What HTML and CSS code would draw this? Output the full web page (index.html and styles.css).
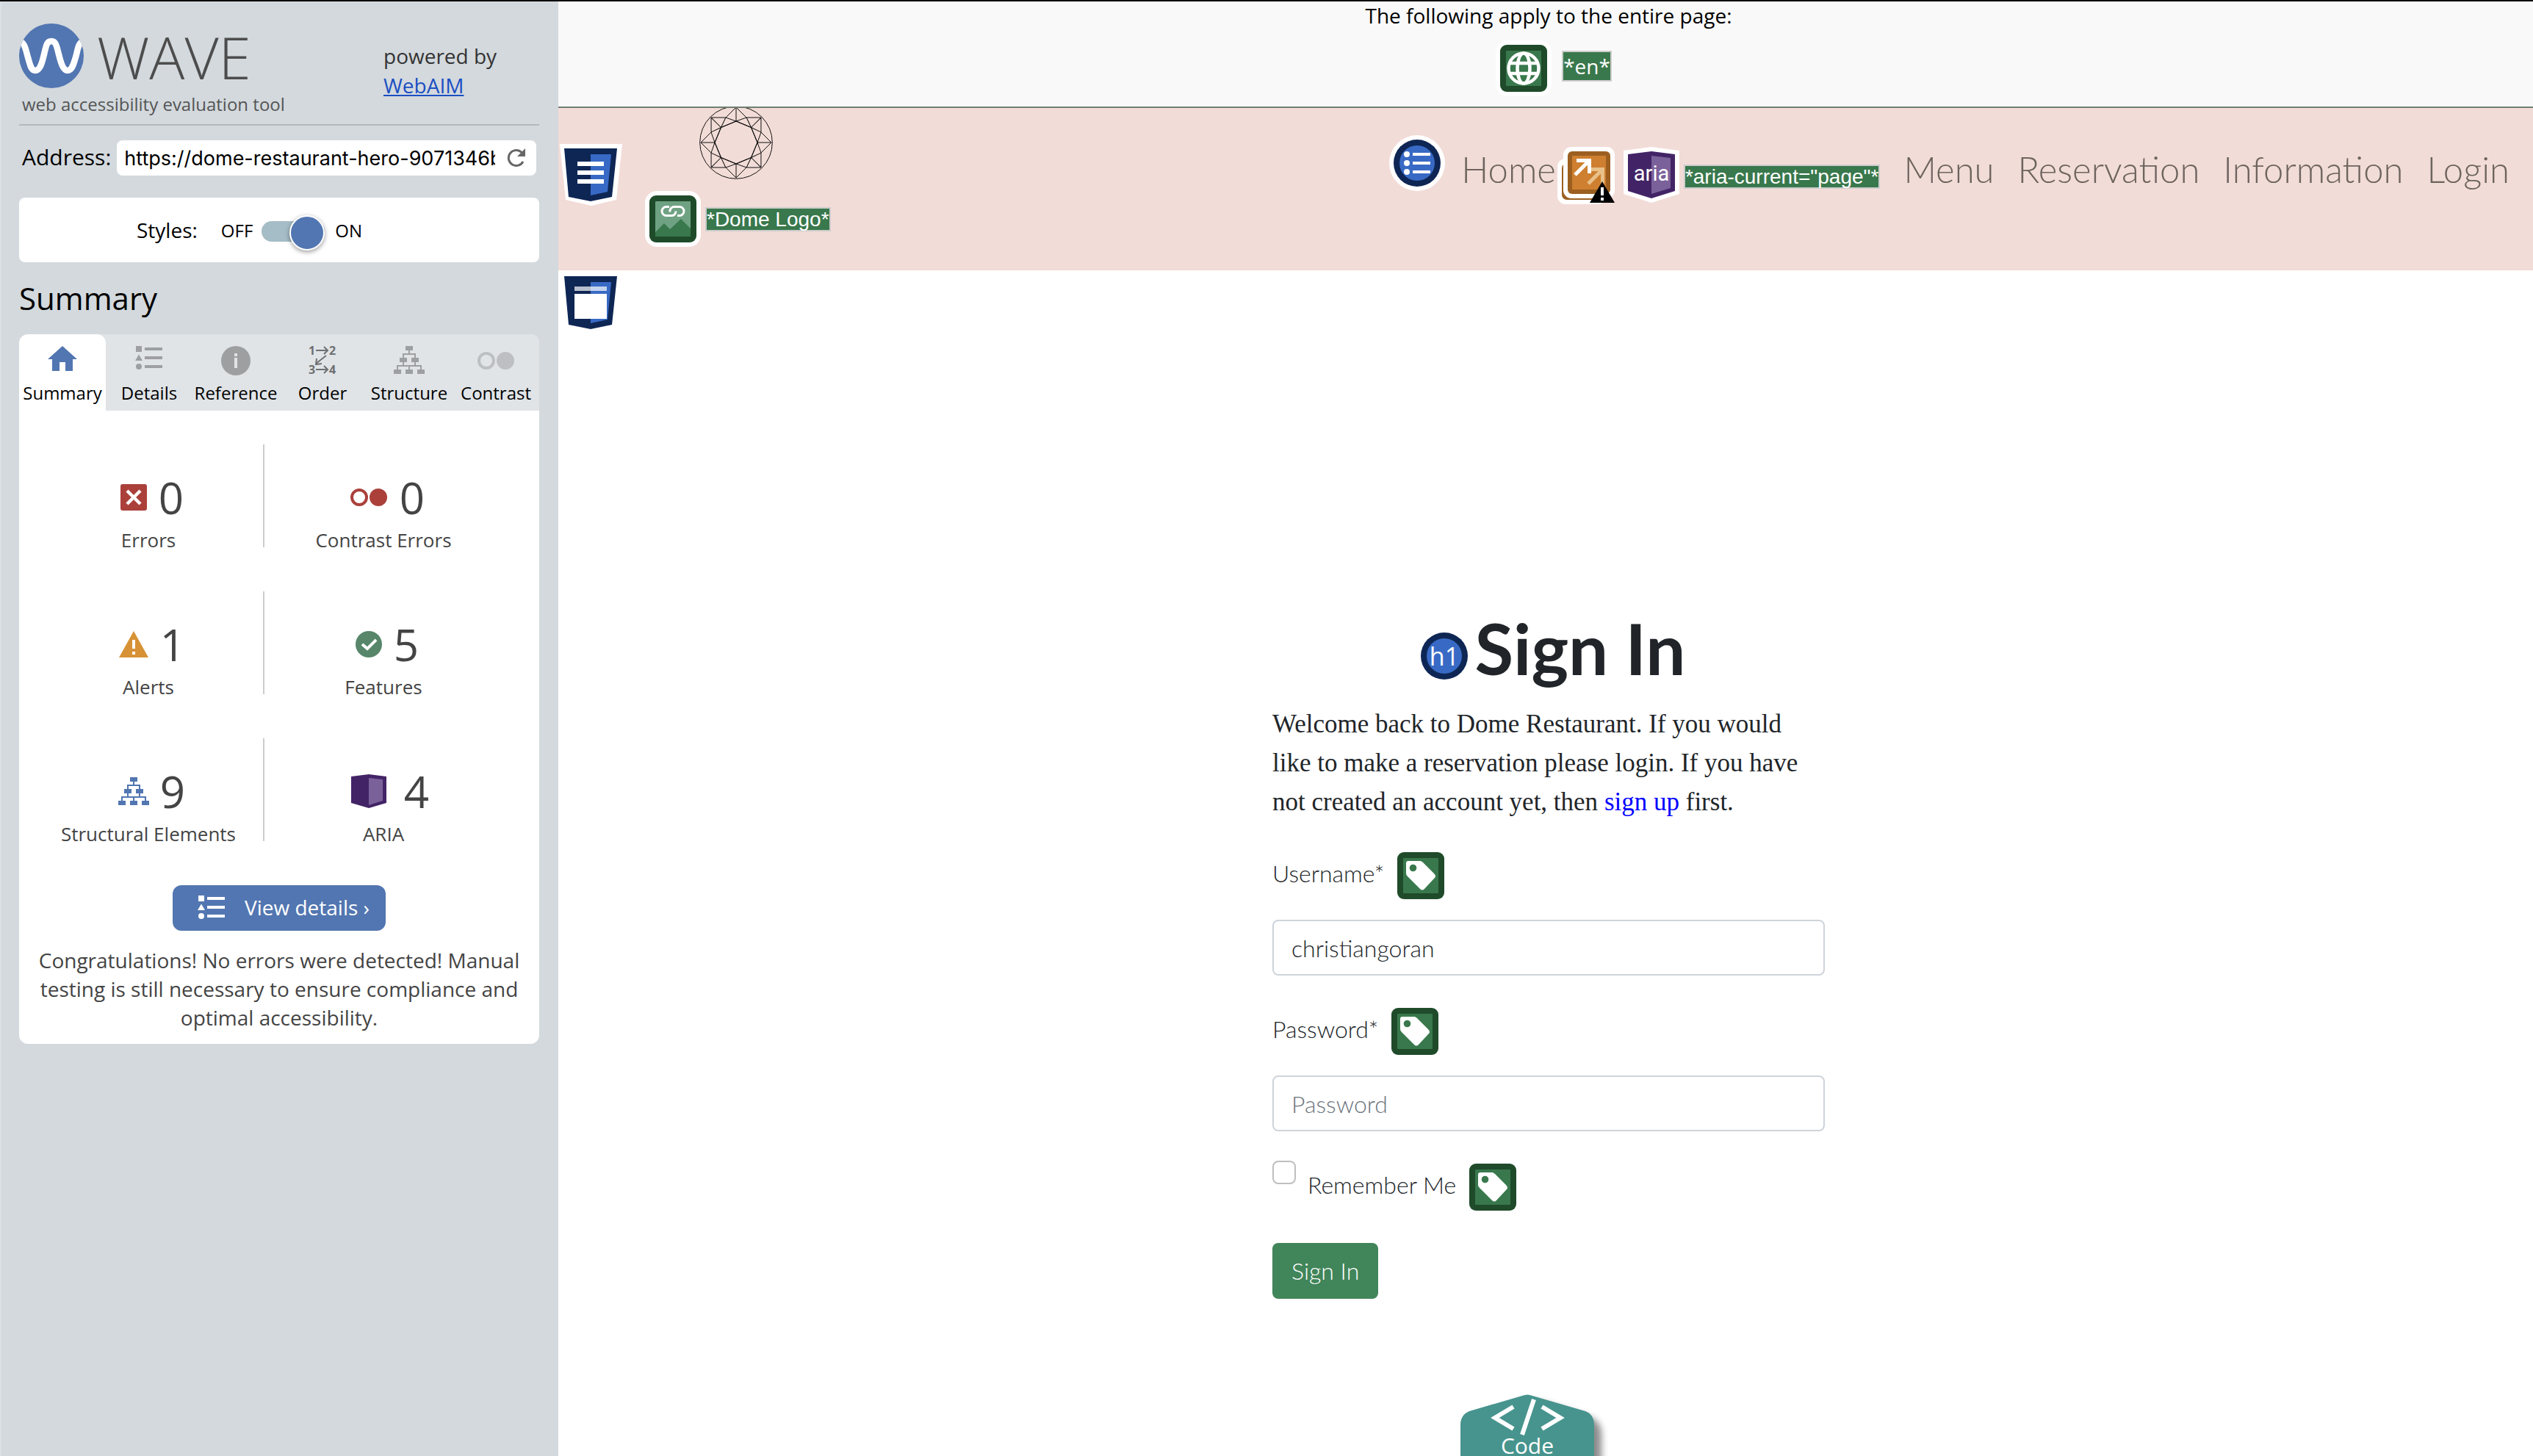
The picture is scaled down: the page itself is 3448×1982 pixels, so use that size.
FILE: index.html
```html
<!DOCTYPE html>
<html lang="en">
<head>
<meta charset="utf-8">
<title>WAVE Report - Dome Restaurant</title>
<link rel="stylesheet" href="styles.css">
</head>
<body>
<svg class="defs" aria-hidden="true">
  <defs>
    <symbol id="tag" viewBox="0 0 76 76">
      <rect width="76" height="76" rx="16" fill="#fff"/>
      <rect x="6" y="6" width="64" height="64" rx="9" fill="#1f4b2a"/>
      <rect x="14" y="14" width="48" height="48" rx="1" fill="#39784c"/>
      <path d="M21 18h16q2 0 4 2l15 15q4 4 0 7l-13 14q-3 3-6 0L20 39q-2-2-2-4V21q0-3 3-3z" fill="#fff"/>
      <circle cx="27.500" cy="27.500" r="4.800" fill="#39784c"/>
    </symbol>
    <symbol id="list" viewBox="0 0 38 32">
      <path d="M1 0h8v8H1zM5 11.500l5 8.500H0z M13 2h24v4H13zM13 14h24v4H13zM13 26h24v4H13z"/>
      <circle cx="5" cy="28" r="4"/>
    </symbol>
    <symbol id="tree" viewBox="0 0 42 38">
      <path d="M16 0h10v6H16zM8 16h10v6H8zM24 16h10v6H24zM0 32h10v6H0zM16 32h10v6H16zM32 32h10v6H32z"/>
      <path d="M21 6v5M13 16v-5h16v5M13 22v5M29 22v5M5 32v-5h32v5M21 27v5" fill="none" stroke="currentColor" stroke-width="2"/>
    </symbol>
    <symbol id="dots" viewBox="0 0 50 24">
      <circle cx="12" cy="12" r="10" fill="none" stroke="currentColor" stroke-width="4"/>
      <circle cx="38" cy="12" r="12"/>
    </symbol>
  </defs>
</svg>
<div class="app">
  <aside class="sidebar">
    <header class="brand">
      <div class="brand-name">
        <div class="wordmark">
          <svg class="wave-logo" viewBox="0 0 88 88">
            <clipPath id="disc"><circle cx="44" cy="44" r="44"/></clipPath>
            <circle cx="44" cy="44" r="44" fill="#5276b1"/>
            <path clip-path="url(#disc)" d="M-2 24C8 24 9 36 12 46S16 64 22 64s9-9 12-22S38 24 44 24s7 6 10 18S60 64 66 64s8-8 11-18S80 24 90 24" fill="none" stroke="#fff" stroke-width="8.500"/>
          </svg>
          <span>WAVE</span>
        </div>
        <p class="tagline">web accessibility evaluation tool</p>
      </div>
      <p class="powered">powered by<br><a href="#">WebAIM</a></p>
    </header>
    <form class="address">
      <label for="url">Address:</label>
      <div class="address-box">
        <input id="url" type="text" value="https://dome-restaurant-hero-9071346b2c.herokuapp.com">
        <button type="button" class="reload" aria-label="Reload">
          <svg viewBox="0 0 26 26"><path d="M22 18A10.500 10.500 0 1 1 19 4.500L21 7" fill="none" stroke="#666" stroke-width="3"/><path d="M25 0v11H14z" fill="#666"/></svg>
        </button>
      </div>
    </form>
    <div class="styles-panel">
      <label class="styles-label" for="styles">Styles:</label>
      <span>OFF</span>
      <input id="styles" class="toggle" type="checkbox" checked>
      <span>ON</span>
    </div>
    <h2>Summary</h2>
    <section class="card">
      <nav class="tabs">
        <button class="tab active"><svg viewBox="0 0 40 40" fill="#5276b1"><path d="M20 0l20 18h-6v16H24V22h-8v12H6V18H0z"/></svg>Summary</button>
        <button class="tab"><svg viewBox="-1 0 40 40" fill="#9e9fa1"><use href="#list" width="38" height="32"/></svg>Details</button>
        <button class="tab"><svg viewBox="0 0 40 40" fill="#9e9fa1"><circle cx="20" cy="20" r="20"/><path d="M18 10h4v4h-4zM18 16h4v14h-4z" fill="#e0e4e7"/></svg>Reference</button>
        <button class="tab"><svg class="order" viewBox="0 0 40 40"><g fill="#6f7071" font-family="Open Sans, sans-serif" font-size="16" font-weight="700"><text x="1" y="12">1</text><text x="29" y="12">2</text><text x="1" y="38">3</text><text x="29" y="38">4</text></g><path d="M11 6h16M22 1l5 5-5 5M11 32h16M22 27l5 5-5 5M25 13L11 24M12 17l-1 8 8-1" fill="none" stroke="#6f7071" stroke-width="2"/></svg>Order</button>
        <button class="tab gray"><svg viewBox="0 0 42 40" fill="#9e9fa1"><use href="#tree" width="42" height="38"/></svg>Structure</button>
        <button class="tab pale"><svg viewBox="0 0 50 40" fill="#bebfc3"><use href="#dots" y="8" width="50" height="24"/></svg>Contrast</button>
      </nav>
      <div class="stats">
        <div class="stat"><div class="figure"><svg class="w56" viewBox="0 0 56 40"><rect x="10" y="2" width="36" height="36" rx="3" fill="#ab403b"/><path d="M19 11l18 18M37 11L19 29" stroke="#fff" stroke-width="4.500"/></svg>0</div>Errors</div>
        <div class="stat"><div class="figure"><svg class="w72 red" viewBox="0 0 72 40"><use href="#dots" x="11" y="8" width="50" height="24"/></svg>0</div>Contrast Errors</div>
        <div class="stat"><div class="figure"><svg class="w60" viewBox="0 0 60 40"><path d="M30 2l20 36H10z" fill="#d79235"/><path d="M28 14h4v12h-4zM28 30h4v4h-4z" fill="#fff"/></svg>1</div>Alerts</div>
        <div class="stat"><div class="figure"><svg class="w56" viewBox="0 0 56 40"><circle cx="28" cy="20" r="18" fill="#57866a"/><path d="M19 20l7 6 12-12" fill="none" stroke="#fff" stroke-width="4"/></svg>5</div>Features</div>
        <div class="stat"><div class="figure"><svg class="w60 blue" viewBox="0 0 60 40"><use href="#tree" x="9" y="1" width="42" height="38"/></svg>9</div>Structural Elements</div>
        <div class="stat"><div class="figure"><svg class="w84" viewBox="0 0 84 48"><path d="M18 4l24-3 24 3v36l-24 7-24-7z" fill="#422466"/><path d="M42 6l19 2v29l-19 6z" fill="#7b619a"/></svg>4</div>ARIA</div>
      </div>
      <button class="details"><svg viewBox="0 0 38 32" fill="#fff"><use href="#list"/></svg>View details ›</button>
      <p class="congrats">Congratulations! No errors were detected! Manual testing is still necessary to ensure compliance and optimal accessibility.</p>
    </section>
  </aside>

  <div class="page">
    <section class="page-wide">
      <p>The following apply to the entire page:</p>
      <div class="page-wide-icons">
        <svg class="badge" viewBox="0 0 76 76">
          <rect width="76" height="76" rx="16" fill="#fff"/><rect x="6" y="6" width="64" height="64" rx="9" fill="#1f4b2a"/><rect x="14" y="14" width="48" height="48" rx="1" fill="#39784c"/>
          <g fill="none" stroke="#fff" stroke-width="4.500"><circle cx="38" cy="38" r="20.500"/><ellipse cx="38" cy="38" rx="8.500" ry="20.500"/><path d="M20 31h36M20 45h36"/></g>
        </svg>
        <span class="note">*en*</span>
      </div>
    </section>
    <header class="navbar">
      <svg class="shield" viewBox="0 0 85 84">
        <path d="M0 0h85l-8 76-34 8-35-8z" fill="#fff"/>
        <path d="M6 6h72l-7 66-29 6-30-6z" fill="#0e2654"/><path d="M42 14h28l-5 51-23 5z" fill="#386ac5"/>
        <path d="M24 24h36v6H24zM24 36h36v6H24zM24 48h36v6H24z" fill="#fff"/>
      </svg>
      <a class="logo" href="#" aria-label="Dome home">
        <svg class="dome" viewBox="0 3 104 97" fill="none" stroke="#111" stroke-width="1">
          <circle cx="50" cy="50" r="49.300"/>
          <g id="facets"><path id="facet" d="M50 2v19M50 2L36 16M50 2l14 14M50 21L36 16M50 21l14-5M50 21l20.500 8.500M50 21L29.500 29.500"/><use href="#facet" transform="rotate(90 50 50)"/><use href="#facet" transform="rotate(180 50 50)"/><use href="#facet" transform="rotate(270 50 50)"/></g>
          <use href="#facets" transform="rotate(45 50 50)"/>
        </svg>
        <span class="logo-note">
          <svg class="badge" viewBox="0 0 76 76">
            <rect width="76" height="76" rx="16" fill="#fff"/><rect x="6" y="6" width="64" height="64" rx="9" fill="#1f4b2a"/><rect x="14" y="14" width="48" height="48" rx="1" fill="#6fa283"/>
            <path d="M14 56l12-12 8 8 15-14 13 13v11H14z" fill="#39784c"/>
            <path d="M33 21.500h-4a6 6 0 0 0 0 12h8a6 6 0 0 0 5-6M44 33.500h3a6 6 0 0 0 0-12h-8a6 6 0 0 0-5 7" fill="none" stroke="#fff" stroke-width="3"/>
          </svg>
          <span class="note arial">*Dome Logo*</span>
        </span>
      </a>
      <nav class="menu">
        <svg class="badge raised" viewBox="0 0 76 76">
          <circle cx="38" cy="38" r="38" fill="#fff"/><circle cx="38" cy="38" r="32" fill="#0e2654"/><circle cx="38" cy="38" r="24" fill="#386ac5"/>
          <g fill="#fff"><circle cx="24" cy="26" r="4"/><circle cx="24" cy="38" r="4"/><circle cx="24" cy="50" r="4"/><path d="M32 24h24v4H32zM32 36h24v4H32zM32 48h24v4H32z"/></g>
        </svg>
        <div class="current">
          <a href="#" aria-current="page">Home</a>
          <svg class="redundant" viewBox="0 0 78 78">
            <rect y="16" width="66" height="62" rx="11" fill="#fff"/><rect x="6" y="22" width="54" height="50" rx="7" fill="#9c5f20"/>
            <rect x="10" y="8" width="60" height="60" fill="#fff" rx="6"/><rect x="8" width="70" height="70" rx="11" fill="#fff"/>
            <rect x="14" y="6" width="58" height="58" rx="6" fill="#9c5f20"/><rect x="20" y="12" width="46" height="46" rx="1" fill="#ce7f2f"/>
            <path d="M42 30.500h19.500V50M61 31L42 50" fill="none" stroke="#e8c089" stroke-width="5"/>
            <path d="M26 18.500h17.500V36M43 19L24 38" fill="none" stroke="#fff" stroke-width="5"/>
            <path d="M61 47l17 29H44z" fill="#000"/><path d="M59 55h4v11h-4zM59 69h4v4h-4z" fill="#fff"/>
          </svg>
          <svg class="badge" viewBox="0 0 76 76">
            <path d="M0 5l38-5 38 5v59L38 76 0 64z" fill="#fff"/><path d="M6 10l32-4 32 4v50L38 70 6 60z" fill="#422466"/><path d="M38 12l26 3v41l-26 8z" fill="#7b619a"/>
            <text x="38" y="46" text-anchor="middle" fill="#fff" font-family="Roboto, sans-serif" font-size="29" font-weight="400">aria</text>
          </svg>
          <span class="note arial">*aria-current="page"*</span>
        </div>
        <a href="#">Menu</a>
        <a href="#">Reservation</a>
        <a href="#">Information</a>
        <a href="#">Login</a>
      </nav>
    </header>
    <main>
      <svg class="shield" viewBox="0 0 85 84">
        <path d="M6 6h72l-7 66-29 6-30-6z" fill="#0e2654"/><path d="M42 14h28l-5 51-23 5z" fill="#386ac5"/>
        <path d="M20 20h44v6H20z" fill="#fff" opacity=".7"/><path d="M20 30h44v34H20z" fill="#fff"/>
      </svg>
      <form class="signin">
        <h1>
          <svg class="badge" viewBox="0 0 76 76"><circle cx="38" cy="38" r="32" fill="#0e2654"/><circle cx="38" cy="38" r="24" fill="#386ac5"/><text x="38" y="51" text-anchor="middle" fill="#fff" font-family="Open Sans, sans-serif" font-size="34" font-weight="400">h1</text></svg>
          Sign In
        </h1>
        <p class="welcome">Welcome back to Dome Restaurant. If you would<br>like to make a reservation please login. If you have<br>not created an account yet, then <a href="#">sign up</a> first.</p>
        <div class="field">
          <div class="row"><label for="user">Username*</label><svg class="badge"><use href="#tag"/></svg></div>
          <input id="user" type="text" value="christiangoran">
        </div>
        <div class="field">
          <div class="row"><label for="pass">Password*</label><svg class="badge"><use href="#tag"/></svg></div>
          <input id="pass" type="password" placeholder="Password">
        </div>
        <div class="row">
          <input id="remember" type="checkbox"><label for="remember">Remember Me</label><svg class="badge"><use href="#tag"/></svg>
        </div>
        <button type="submit">Sign In</button>
      </form>
    </main>
    <button class="code-tab">
      <svg viewBox="0 0 222 84"><defs><filter id="soft" x="-20%" y="-20%" width="140%" height="140%"><feGaussianBlur stdDeviation="5"/></filter></defs><path d="M12 40Q12 36 28 31L88 12q14-4 28 0l60 19q16 6 16 24v60H12z" fill="#000" opacity=".45" filter="url(#soft)"/><path d="M0 42Q0 28 12 23L84 2q7-3 14 0l72 21q12 4 12 20v60H0z" fill="#47948e"/><path d="M72 17L47 32l25 15M111 17l25 15-25 15" fill="none" stroke="#fff" stroke-width="6"/><path d="M100 7L84 55" stroke="#fff" stroke-width="6"/></svg>
      <span>Code</span>
    </button>
  </div>
</div>
</body>
</html>
```
FILE: styles.css
```css
* { box-sizing: border-box; }
body {
  margin: 0;
  font-family: "Open Sans", "Noto Sans", sans-serif;
  font-size: 28px;
  color: #000;
  background: #fff;
  overflow: hidden;
}
p, h1, h2 { margin: 0; }
button, input { font: inherit; margin: 0; }
svg { display: block; flex: none; }
.defs { position: absolute; width: 0; height: 0; }

.app {
  display: grid;
  grid-template-columns: 760px 1fr;
  height: 100vh;
  border-top: 2px solid #0b0b0b;
  overflow: hidden;
}

/* Sidebar */
.sidebar {
  background: #d3d9dd;
  border-left: 2px solid #dbe0e3;
  padding: 30px 26px 0 24px;
}
.brand {
  display: flex;
  height: 139px;
  border-bottom: 2px solid #b2b8bb;
}
.brand-name { width: 496px; }
.wordmark {
  display: flex;
  align-items: center;
  gap: 18px;
  height: 88px;
  font-size: 80px;
  font-weight: 300;
  color: #4d4d4d;
}
.wave-logo { width: 88px; height: 88px; }
.tagline { padding-left: 4px; font-size: 24px; line-height: 44px; color: #555; }
.powered { padding-top: 24px; line-height: 40px; color: #333; }
.powered a { color: #1b4fc4; }

.address {
  display: flex;
  align-items: center;
  gap: 8px;
  margin-top: 20px;
  padding: 0 4px;
  font-size: 30px;
}
.address label { height: 44px; line-height: 42px; }
.address-box {
  display: flex;
  align-items: center;
  flex: 1;
  gap: 16px;
  height: 48px;
  padding: 0 14px 0 10px;
  border-radius: 8px;
  background: #fff;
}
.address-box input {
  flex: 1;
  min-width: 0;
  border: 0;
  padding: 0;
  font-family: Inter, sans-serif;
  font-size: 27px;
  background: none;
}
.reload { border: 0; padding: 0; background: none; }
.reload svg { width: 26px; height: 26px; }

.styles-panel {
  display: flex;
  align-items: center;
  height: 88px;
  margin-top: 30px;
  padding-left: 160px;
  border-radius: 8px;
  background: #fff;
  font-size: 24px;
}
.styles-label { font-size: 28px; margin-right: 32px; }
.toggle {
  appearance: none;
  position: relative;
  width: 86px;
  height: 28px;
  margin: 4px 14px 0 12px;
  border-radius: 14px;
  background: #a5bdc6;
}
.toggle::after {
  content: "";
  position: absolute;
  right: 0;
  top: -8px;
  width: 44px;
  height: 44px;
  border: 2px solid #fff;
  border-radius: 50%;
  background: #5276b1;
  box-shadow: 0 2px 6px rgba(0, 0, 0, .4);
}
h2 { margin-top: 20px; font-size: 42px; font-weight: 400; line-height: 58px; }

.card {
  margin-top: 20px;
  padding-bottom: 4px;
  border-radius: 12px;
  overflow: hidden;
  background: #fff;
  color: #444;
  text-align: center;
}
.tabs { display: grid; grid-template-columns: repeat(6, 1fr); background: #e0e4e7; }
.tab {
  display: flex;
  flex-direction: column;
  align-items: center;
  gap: 8px;
  height: 104px;
  padding: 16px 0 0;
  border: 0;
  background: none;
  color: #000;
  font-size: 24px;
  line-height: 32px;
}
.tab svg { height: 40px; }
.tab .order { overflow: visible; }
.tab.active { background: #fff; border-radius: 12px 12px 0 0; }
.tab.gray svg { color: #9e9fa1; }
.tab.pale svg { color: #bebfc3; }

.stats {
  display: grid;
  grid-template-columns: 314px 324px;
  row-gap: 60px;
  padding: 46px 20px 0;
}
.stat { height: 140px; padding-top: 32px; font-size: 26px; line-height: 36px; }
.stat:nth-child(odd) { border-right: 2px solid #ccc; }
.figure {
  display: flex;
  justify-content: center;
  align-items: center;
  gap: 6px;
  height: 80px;
  font-size: 60px;
  line-height: 80px;
}
.figure svg { height: 40px; }
.figure .w56 { width: 56px; }
.figure .w60 { width: 60px; }
.figure .w72 { width: 72px; }
.figure .w84 { width: 84px; height: 48px; }
.red { color: #ab403b; fill: #ab403b; }
.blue { color: #5276b1; fill: #5276b1; }

.details {
  display: flex;
  align-items: center;
  gap: 26px;
  height: 62px;
  margin: 60px auto 21px;
  padding: 0 22px 2px 34px;
  border: 0;
  border-radius: 12px;
  background: #5276b1;
  color: #fff;
}
.details svg { width: 38px; height: 32px; }
.congrats { padding: 0 20px 12px; line-height: 39px; }

/* Evaluated page */
.page {
  position: relative;
  display: flex;
  flex-direction: column;
  min-width: 0;
  overflow: hidden;
}
.badge { width: 76px; height: 76px; }
.page-wide {
  height: 145px;
  padding-left: 8px;
  border-bottom: 2px solid #727e72;
  background: #f9f9f9;
  text-align: center;
  line-height: 38px;
}
.page-wide-icons {
  display: flex;
  justify-content: center;
  align-items: center;
  gap: 14px;
  margin-top: 15px;
  padding-left: 14px;
}
.page-wide-icons .note { margin-bottom: 6px; }
.note {
  border: 2px solid #ccc;
  background: #39784c;
  color: #fff;
  font-size: 28px;
  line-height: 38px;
  white-space: nowrap;
}
.note.arial { font-family: "Liberation Sans", Arial, sans-serif; line-height: 29px; }

.navbar {
  display: flex;
  height: 221px;
  padding: 0 32px 0 2px;
  background: #f2dcd7;
}
.shield { width: 85px; height: 84px; }
.navbar .shield { margin-top: 49px; }
.logo {
  display: flex;
  flex-direction: column;
  align-items: center;
  gap: 16px;
  margin-left: 31px;
  text-decoration: none;
}
.dome { width: 104px; height: 97px; }
.logo-note { display: flex; align-items: center; gap: 6px; }
.menu {
  display: flex;
  align-items: flex-start;
  gap: 32px;
  margin-left: auto;
  padding-top: 35px;
  font-family: Lato, sans-serif;
  font-size: 49px;
  font-weight: 300;
  line-height: 96px;
}
.menu a { color: #6d645f; text-decoration: none; }
.menu .raised { margin: 2px -10px 0 0; }
.current { display: flex; }
.redundant { width: 78px; height: 78px; margin: 18px 12px 0 2px; }
.current .badge { margin: 18px 6px 0 0; }
.current .note { align-self: flex-start; margin-top: 42px; }

main {
  flex: 1;
  padding: 2px 0 0 8px;
  background: #fff;
  color: #212529;
}
main > .shield { margin-left: -6px; }
.signin {
  width: 752px;
  margin: 370px auto 0;
  font-family: Lato, sans-serif;
  font-size: 32px;
  font-weight: 300;
}
h1 {
  display: flex;
  justify-content: center;
  align-items: center;
  gap: 4px;
  padding-left: 6px;
  font-size: 96px;
  font-weight: 700;
  line-height: 115px;
}
h1 .badge { margin-top: 22px; }
.welcome {
  margin: 20px 0 36px;
  font-family: "Liberation Serif", Baskerville, serif;
  font-size: 35px;
  font-weight: 400;
  line-height: 53px;
  white-space: nowrap;
}
.welcome a { color: #00f; text-decoration: none; }
.field { margin-bottom: 38px; }
.row { display: flex; align-items: center; gap: 12px; }
.row label { padding-bottom: 8px; }
.field input {
  width: 100%;
  height: 76px;
  margin-top: 22px;
  padding: 0 24px;
  border: 2px solid #ced4da;
  border-radius: 8px;
  background: #fff;
  color: #212529;
}
.field input::placeholder { color: #6c757d; opacity: 1; }
#remember {
  appearance: none;
  align-self: flex-start;
  width: 32px;
  height: 32px;
  margin: 2px 4px 0 0;
  border: 2px solid #bfbfbf;
  border-radius: 8px;
}
.signin button {
  height: 76px;
  margin-top: 38px;
  padding: 0 26px 2px;
  border: 0;
  border-radius: 8px;
  background: #41855a;
  color: #fff;
}
.code-tab {
  position: absolute;
  left: calc(50% - 116px);
  bottom: 0;
  width: 182px;
  height: 84px;
  padding: 0;
  border: 0;
  background: none;
  color: #fff;
  font-size: 30px;
}
.code-tab svg { width: 222px; height: 84px; }
.code-tab span { position: absolute; left: 0; right: 0; top: 50px; line-height: 40px; }
```
